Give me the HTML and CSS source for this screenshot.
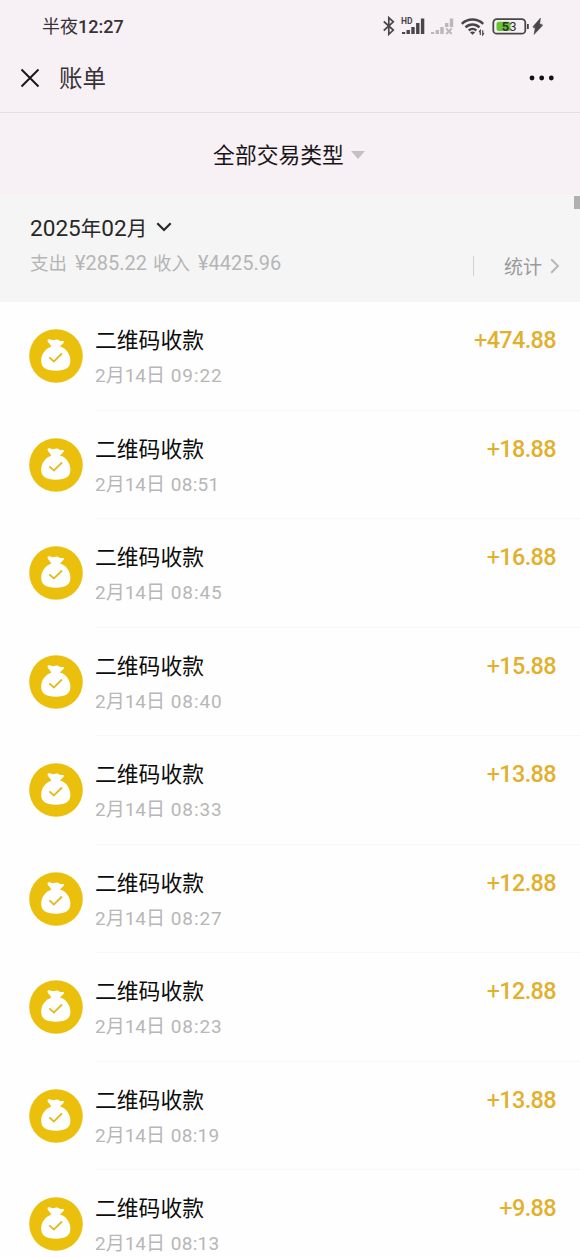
FILE: index.html
```
<!DOCTYPE html>
<html lang="zh-CN">
<head>
<meta charset="utf-8">
<title>账单</title>
<link rel="stylesheet" href="styles.css">
</head>
<body>
<svg class="defs" width="0" height="0">
  <symbol id="bag" viewBox="0 0 54 54">
    <circle cx="27" cy="27" r="26.8" fill="#ebc00c"/>
    <path d="M18.500 11.800C18.200 10.500 19.800 9.900 21.400 10.500C23.300 11.300 24.700 11.400 26.300 10.800C27.900 10.200 29 10.500 30.300 11.400C31.600 12.200 33 11.700 34.300 12C35.500 12.300 35 13.700 34 14.600L30.800 17.600C37.500 19.300 41.400 25.500 41.400 31.800C41.400 38.500 37 41.700 26.800 41.700C16.600 41.700 12.200 38.500 12.200 31.800C12.200 25.600 16 19.700 22.200 17.800C21.800 15.300 19 14 18.500 11.800Z" fill="#fff"/>
    <path d="M20.300 28.400l4.600 4 8.100-7.900" fill="none" stroke="#e3bb22" stroke-width="1.900"/>
  </symbol>
</svg>
<header class="top">
  <div class="status">
    <div class="clock">半夜<span>12:27</span></div>
    <svg class="indicators" viewBox="0 0 164 24" width="164" height="24">
      <path d="M1.800 8.500l9.500 8.500-4.500 4.300V4.700l4.500 4.100-9.500 8.700" fill="none" stroke="#49464a" stroke-width="1.700"/>
      <text x="19" y="11" class="hd">HD</text>
      <path d="M20 19h3.200v2H20zM24.500 17H27.900V21H24.500zM29.300 14h3.400v7h-3.400zM34.100 10h3.400v11h-3.400zM38.900 5.500h3.400V21h-3.400z" fill="#49464a"/>
      <path d="M49 19h3.200v2H49zM53.600 17H57V21h-3.400zM58.300 14h3.400v7h-3.400zM63 10h3.400v4H63zM67.800 5.500h3.400v8.500h-3.400z" fill="#bab6ba"/>
      <path d="M64.200 15.500l5.500 5.500M69.700 15.500L64.200 21" stroke="#bab6ba" stroke-width="1.800"/>
      <g fill="none" stroke="#49464a" stroke-width="2.500">
        <path d="M79.800 10.800c6-5.700 15.400-5.700 21.400 0M83.500 14.300c4-3.800 10-3.800 14 0M86.800 17.500c2.200-2 5.300-2 7.500 0"/>
      </g>
      <path d="M88 19.400c1.400-1.200 3.700-1.200 5.100 0l-2.500 2.400z" fill="#49464a"/>
      <path d="M98.300 22v-4.500l-1.300 1.600M100.700 17.200v4.500l1.300-1.600" fill="none" stroke="#49464a" stroke-width="1.200"/>
      <rect x="111.300" y="6.200" width="32" height="14.500" rx="3.500" fill="none" stroke="#49464a" stroke-width="1.800"/>
      <rect x="114.500" y="8.800" width="14" height="9.300" rx="2" fill="#66c532"/>
      <text x="127.200" y="17.900" class="level"><tspan font-weight="700">5</tspan>3</text>
      <path d="M145 11h1.800v5H145z" fill="#49464a"/>
      <path d="M158.500 5l-7.700 8.800h3l-2.600.9 2 .2-1.200 6.600 8.800-9.200h-3.300l2.800-1-2.600-.2z" fill="#49464a" stroke="#49464a" stroke-width=".5"/>
    </svg>
  </div>
  <nav class="nav">
    <svg width="20" height="20" viewBox="0 0 20 20"><path d="M1.500 1.500l17 17M18.500 1.500l-17 17" stroke="#171517" stroke-width="1.900" fill="none"/></svg>
    <h1>账单</h1>
    <svg class="more" width="26" height="6" viewBox="0 0 26 6"><circle cx="3" cy="3" r="2.400"/><circle cx="12.700" cy="3" r="2.400"/><circle cx="22.300" cy="3" r="2.400"/></svg>
  </nav>
  <div class="filter"><span>全部交易类型</span><svg width="14" height="8" viewBox="0 0 14 8"><path d="M0 0h14L7 8z" fill="#c4c0c4"/></svg></div>
</header>
<section class="summary">
  <div class="period">
    <div class="month"><span><i>2025</i>年<i>02</i>月</span><svg width="16" height="10" viewBox="0 0 16 10"><path d="M1.300 1.300L8 8l6.700-6.700" fill="none" stroke="#272727" stroke-width="2.200"/></svg></div>
    <p class="totals"><span>支出</span><i>¥285.22</i><span>收入</span><i>¥4425.96</i></p>
  </div>
  <div class="stats"><span>统计</span><svg width="10" height="16" viewBox="0 0 10 16"><path d="M1.200 1.300L8 8l-6.800 6.700" fill="none" stroke="#b7b7b7" stroke-width="1.900"/></svg></div>
  <div class="scrollbar"></div>
</section>
<main class="list">
  <article class="row"><svg class="icon"><use href="#bag"/></svg><div class="body"><div><h2>二维码收款</h2><time>2月14日 <i>09:22</i></time></div><b><i>+</i>474.88</b></div></article>
  <article class="row"><svg class="icon"><use href="#bag"/></svg><div class="body"><div><h2>二维码收款</h2><time>2月14日 <i class="tight">08:51</i></time></div><b><i>+</i>18.88</b></div></article>
  <article class="row"><svg class="icon"><use href="#bag"/></svg><div class="body"><div><h2>二维码收款</h2><time>2月14日 <i>08:45</i></time></div><b><i>+</i>16.88</b></div></article>
  <article class="row"><svg class="icon"><use href="#bag"/></svg><div class="body"><div><h2>二维码收款</h2><time>2月14日 <i>08:40</i></time></div><b><i>+</i>15.88</b></div></article>
  <article class="row"><svg class="icon"><use href="#bag"/></svg><div class="body"><div><h2>二维码收款</h2><time>2月14日 <i>08:33</i></time></div><b><i>+</i>13.88</b></div></article>
  <article class="row"><svg class="icon"><use href="#bag"/></svg><div class="body"><div><h2>二维码收款</h2><time>2月14日 <i>08:27</i></time></div><b><i>+</i>12.88</b></div></article>
  <article class="row"><svg class="icon"><use href="#bag"/></svg><div class="body"><div><h2>二维码收款</h2><time>2月14日 <i>08:23</i></time></div><b><i>+</i>12.88</b></div></article>
  <article class="row"><svg class="icon"><use href="#bag"/></svg><div class="body"><div><h2>二维码收款</h2><time>2月14日 <i class="tight">08:19</i></time></div><b><i>+</i>13.88</b></div></article>
  <article class="row"><svg class="icon"><use href="#bag"/></svg><div class="body"><div><h2>二维码收款</h2><time>2月14日 <i class="tight">08:13</i></time></div><b><i>+</i>9.88</b></div></article>
</main>
</body>
</html>
```
FILE: styles.css
```
* { box-sizing: border-box; margin: 0; padding: 0; }
body {
  width: 580px;
  height: 1257px;
  overflow: hidden;
  display: flex;
  flex-direction: column;
  background: #fefefe;
  font-family: Roboto, "Noto Sans CJK SC", sans-serif;
}
i { font-style: normal; }
svg { display: block; flex: none; }
.defs { position: absolute; }
.top { height: 195px; flex: none; background: #f7f1f6; }
.status {
  height: 52px;
  padding: 0 34px 0 42px;
  display: flex;
  justify-content: space-between;
  align-items: center;
}
.clock { margin-top: 1px; font-size: 18px; line-height: 24px; color: #363336; white-space: nowrap; }
.clock span { font-weight: 500; }
.indicators { margin-top: -2px; }
.hd { font: bold 8.500px Roboto, sans-serif; fill: #49464a; }
.level { font: 400 13px Roboto, sans-serif; fill: #333; text-anchor: middle; }
.nav {
  height: 61px;
  padding: 0 25px 9px 20px;
  border-bottom: 1px solid #e5dfe4;
  display: flex;
  align-items: center;
}
.nav h1 { margin: 2px 0 0 19px; font-size: 23.500px; line-height: 30px; font-weight: 400; color: #363336; }
.more { margin-left: auto; fill: #111; }
.filter {
  height: 82px;
  padding-right: 2px;
  display: flex;
  justify-content: center;
  align-items: center;
  gap: 7px;
  font-size: 21.800px;
  color: #171517;
}
.filter span { margin-top: -1px; }
.filter svg { margin-top: 1px; }
.summary {
  position: relative;
  flex: none;
  height: 107px;
  padding: 15px 20px 0 30px;
  background: #f5f5f5;
  display: flex;
  justify-content: space-between;
}
.month { display: flex; align-items: center; gap: 9px; height: 34px; font-size: 20.500px; color: #272727; }
.month i { font-size: 22.600px; }
.totals { display: flex; align-items: baseline; margin-top: 6px; font-size: 18.500px; line-height: 26px; color: #b5b5b5; white-space: nowrap; }
.totals i { margin: 0 6px 0 8px; font-size: 20px; }
.stats {
  align-self: flex-start;
  margin-top: 46px;
  height: 20px;
  padding-left: 30px;
  border-left: 1px solid #d2d2d2;
  display: flex;
  align-items: center;
  gap: 8px;
  font-size: 19px;
  line-height: 20px;
  color: #999;
}
.stats span { margin-top: 3px; }
.scrollbar { position: absolute; right: 0; top: 1px; width: 6px; height: 13px; background: #b0b0b0; }
.row { height: 108.500px; padding-left: 29px; display: flex; }
.icon { width: 54px; height: 54px; margin-top: 27px; }
.body {
  flex: 1;
  margin-left: 12px;
  padding: 23px 24px 0 0;
  border-bottom: 1px solid #f7f7f7;
  display: flex;
  justify-content: space-between;
}
.body h2 { font-size: 21.800px; line-height: 32px; font-weight: 400; color: #0c0c0c; }
.body time { display: block; margin-top: 6px; font-size: 19px; line-height: 26px; color: #b7b7b7; white-space: nowrap; }
.body time i { margin-left: 1px; letter-spacing: .9px; }
.body time .tight { letter-spacing: .3px; }
.body b { margin-top: -1px; font-size: 23.400px; line-height: 33px; letter-spacing: -.6px; font-weight: 500; color: #e2b02d; }
.body b i { font-weight: 400; }
```
